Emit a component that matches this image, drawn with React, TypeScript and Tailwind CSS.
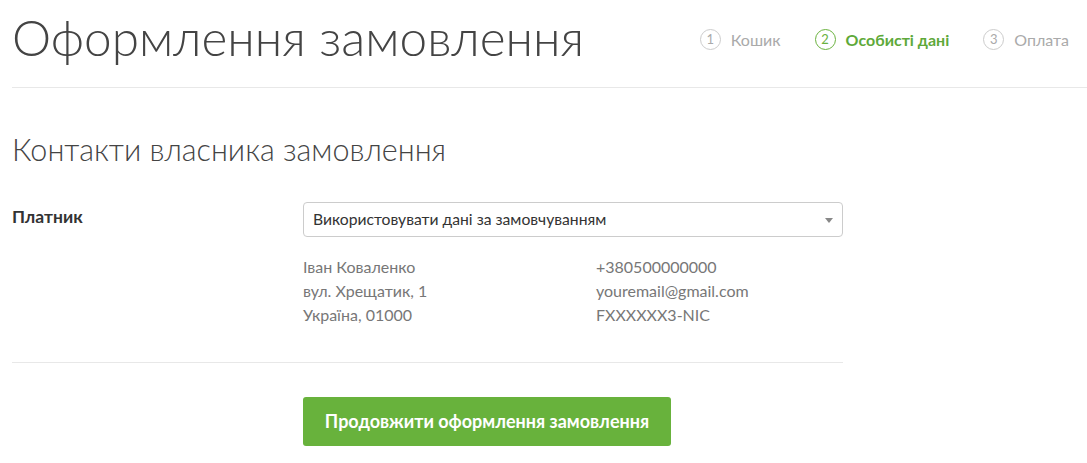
const steps = [
    { n: 1, label: 'Кошик', active: false },
    { n: 2, label: 'Особисті дані', active: true },
    { n: 3, label: 'Оплата', active: false },
];

export default function App() {
    return (
        <div className="min-h-screen bg-white pl-3 text-[#333] font-['Lato','Liberation_Sans',sans-serif]">
            {/* Header */}
            <div className="flex items-center justify-between border-b border-[#e8e8e8] h-[88px] pb-2">
                <h1 className="text-[49.5px] font-light leading-none text-[#444] -mt-1">Оформлення замовлення</h1>
                <ol className="flex items-center gap-[34px] pr-[18px]">
                    {steps.map((s) => (
                        <li key={s.n} className="flex items-center gap-[10px]">
                            <span
                                className={`w-[21px] h-[21px] rounded-full border flex items-center justify-center text-[13px] leading-none ${
                                    s.active ? 'border-[#6ab23e] text-[#6ab23e]' : 'border-[#ccc] text-[#aaa]'
                                }`}
                            >
                                {s.n}
                            </span>
                            <span
                                className={`text-[16px] ${
                                    s.active ? 'text-[#5ea93a] font-bold' : 'text-[#aaa]'
                                }`}
                            >
                                {s.label}
                            </span>
                        </li>
                    ))}
                </ol>
            </div>

            {/* Contacts */}
            <div className="w-[831px]">
                <h2 className="mt-[41px] text-[30.5px] font-light leading-[40px] text-[#444]">Контакти власника замовлення</h2>

                <div className="mt-[33px] flex">
                    <div className="w-[291px] pt-[2px] text-[17.5px] font-bold text-[#333]">Платник</div>
                    <div className="flex-1">
                        <div className="relative h-[35px] border border-[#ccc] rounded-[4px] flex items-center px-[9px] text-[15.7px] text-[#333]">
                            Використовувати дані за замовчуванням
                            <span className="absolute right-[9px] top-[15px] w-0 h-0 border-l-[4px] border-r-[4px] border-t-[5px] border-l-transparent border-r-transparent border-t-[#888]" />
                        </div>
                        <div className="mt-[18px] grid grid-cols-[293px_1fr] text-[16px] leading-[24px] text-[#777]">
                            <div>
                                <div>Іван Коваленко</div>
                                <div>вул. Хрещатик, 1</div>
                                <div>Україна, 01000</div>
                            </div>
                            <div>
                                <div>+380500000000</div>
                                <div>youremail@gmail.com</div>
                                <div>FXXXXXX3-NIC</div>
                            </div>
                        </div>
                    </div>
                </div>

                <div className="mt-[35px] border-t border-[#e8e8e8]" />

                <div className="mt-[34px] pl-[291px]">
                    <button className="h-[49px] w-[368px] rounded-[3px] bg-[#68b23c] text-white text-[18px] font-bold">
                        Продовжити оформлення замовлення
                    </button>
                </div>
            </div>
        </div>
    );
}
